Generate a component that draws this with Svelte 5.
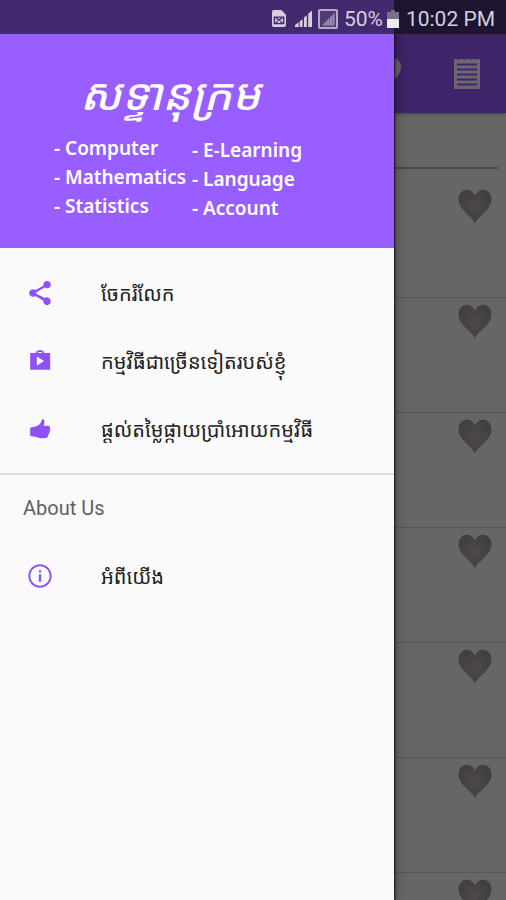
<script>
  const subjects = [
    ['Computer', 'Mathematics', 'Statistics'],
    ['E-Learning', 'Language', 'Account'],
  ];
  const actions = [
    { icon: 'share', label: 'ចែករំលែក' },
    { icon: 'shop', label: 'កម្មវិធីជាច្រើនទៀតរបស់ខ្ញុំ' },
    { icon: 'thumb', label: 'ផ្តល់តម្លៃផ្កាយប្រាំអោយកម្មវិធី' },
  ];
  const about = [{ icon: 'info', label: 'អំពីយើង' }];
  const rows = [1, 2, 3, 4, 5, 6, 7];
</script>

{#snippet menu(items)}
  <ul>
    {#each items as item}
      <li>
        <button class="item">
          <svg class="icon" viewBox="0 0 24 24" aria-hidden="true">
            {#if item.icon === 'share'}
              <path d="M18 15.600c-.76 0-1.440.3-1.960.77L8.910 12.700c.05-.23.09-.46.09-.7s-.04-.47-.09-.7l7.050-4.110c.54.5 1.250.81 2.040.81 1.800 0 3.300-1.400 3.300-3.200S19.800 1.800 18 1.800s-3.200 1.400-3.200 3.200c0 .24.04.47.09.7L8.040 9.500C7.500 9 6.790 8.700 6 8.700c-1.800 0-3.300 1.500-3.300 3.300s1.500 3.300 3.300 3.300c.79 0 1.500-.31 2.040-.81l6.920 4.160c-.05.21-.08.43-.08.65 0 1.700 1.400 3.120 3.120 3.120s3.200-1.420 3.200-3.120-1.480-3.700-3.200-3.700z" />
            {:else if item.icon === 'shop'}
              <path fill-rule="evenodd" d="M8.400 5.200C8.700 3.500 10 2.600 12 2.600s3.300.9 3.600 2.600h5.100v14.200H3.600V5.200zM9.700 5.200h4.600C14 4.500 13.200 4.200 12 4.200s-2 .3-2.300 1zM9.300 8.200v7.800l6.200-3.900z" />
            {:else if item.icon === 'thumb'}
              <path d="M3.600 11l4.700-1.200c2.700-.8 4.600-2.600 5.300-5.500.3-1 1.700-.8 2 .2.400 1.500.1 3-.5 4.700H19c1 0 1.700.8 1.400 1.700.5.600.5 1.500 0 2.100.3.700.1 1.500-.5 2 .2.800-.1 1.500-.8 1.900 0 1.500-.8 2.700-2.300 2.900-2.700.5-5.400.2-7.700-1L3.600 18z" />
            {:else}
              <path d="M11 7h2v2h-2zm0 3.500h2V17h-2zM12 2C6.480 2 2 6.480 2 12s4.480 10 10 10 10-4.480 10-10S17.520 2 12 2zm0 18.300c-4.600 0-8.300-3.700-8.300-8.300S7.400 3.700 12 3.700s8.300 3.700 8.300 8.300-3.700 8.300-8.300 8.300z" />
            {/if}
          </svg>
          <span>{item.label}</span>
        </button>
      </li>
    {/each}
  </ul>
{/snippet}

<div class="screen">
  <main class="page">
    <header class="appbar">
      <button class="tool" aria-label="Favourites">
        <svg class="fav" viewBox="0 0 34 34" aria-hidden="true">
          <path d="M17 32C13 27 1 20 1 10 1 0 13-2 17 6c4-8 16-6 16 4 0 10-12 17-16 22z" />
        </svg>
      </button>
      <button class="tool" aria-label="Notes">
        <svg class="note" viewBox="0 0 26 32" aria-hidden="true">
          <path class="sheet" d="M0 1h3l1 1 2-1h3l1 1 2-1h3l1 1 2-1h3l1 1 2-1h2v30H0z" />
          <path class="rules" d="M3 6.500h20M3 11.500h20M3 16.500h20M3 21.500h20M3 26.500h20" />
        </svg>
      </button>
    </header>
    <div class="search"><input type="text" aria-label="Search" /></div>
    <div class="words">
      {#each rows as row}
        <div class="word">
          <button class="tool" aria-label="Add word {row} to favourites">
            <svg class="heart" viewBox="0 0 34 34" aria-hidden="true">
              <defs>
                <radialGradient id="shade{row}">
                  <stop offset="0" stop-color="#4e4949" />
                  <stop offset="1" stop-color="#423f3f" />
                </radialGradient>
              </defs>
              <path fill="url(#shade{row})" d="M17 34C13.500 27 .5 20.500 .5 10.500 .5-.5 13-2.500 17 6.500c4-9 16.500-7 16.500 4 0 10-13 16.500-16.500 23.500z" />
            </svg>
          </button>
        </div>
      {/each}
    </div>
  </main>

  <nav class="drawer">
    <header class="banner">
      <h1>សទ្ទានុក្រម</h1>
      <div class="subjects">
        {#each subjects as column}
          <ul>
            {#each column as subject}<li>- {subject}</li>{/each}
          </ul>
        {/each}
      </div>
    </header>
    <section class="group">{@render menu(actions)}</section>
    <section class="about">
      <h2>About Us</h2>
      {@render menu(about)}
    </section>
  </nav>

  <div class="status">
    <svg class="sim" viewBox="0 0 15 18" aria-hidden="true">
      <path fill="#d5cfdf" d="M2 0h8l5 5v11a2 2 0 0 1-2 2H2a2 2 0 0 1-2-2V2a2 2 0 0 1 2-2z" />
      <path fill="none" stroke="#43296e" stroke-width="1.500" d="M2.500 7.500h10v7h-10zM4 8l3.500 3L11 8M4 14l2-2M11 14l-2-2" />
    </svg>
    <svg class="bars" viewBox="0 0 18 18" aria-hidden="true">
      <path fill="#d5cfdf" d="M0 16l4-3v5H0zM5 12l3-2v8H5zM9.500 8l3-2.500V18h-3zM14 4l4-3.500V18h-4z" />
    </svg>
    <svg class="nosim" viewBox="0 0 20 20" aria-hidden="true">
      <rect x="1" y="1" width="18" height="18" rx="1" fill="#523a79" stroke="#b5abc5" stroke-width="2" />
      <path fill="#9b8fb0" d="M4 16.500L16.500 4v12.500z" />
      <path stroke="#7d6b99" d="M8.500 12v5M11.500 9v8M14.500 6v11" />
    </svg>
    <span>50%</span>
    <svg class="battery" viewBox="0 0 12 18" aria-hidden="true">
      <path fill="#77708a" d="M4 0h4v2h4v8H0V2h4z" />
      <path fill="#eeeaf2" d="M0 9h12v9H0z" />
    </svg>
    <time>10:02 PM</time>
  </div>
</div>

<style>
  :global(body) { margin: 0; background: #666; }
  .screen {
    position: relative;
    height: 100vh;
    overflow: hidden;
    font-family: Roboto, "Khmer OS", "Noto Sans Khmer", "DejaVu Sans", sans-serif;
  }
  ul { list-style: none; margin: 0; padding: 0; }
  button { border: 0; padding: 0; background: none; font: inherit; color: inherit; text-align: left; }
  svg { display: block; flex: none; }

  .page { background: #666; padding-top: 34px; }
  .appbar {
    display: flex;
    justify-content: flex-end;
    align-items: center;
    gap: 52px;
    height: 79px;
    padding-right: 26px;
    box-sizing: border-box;
    background: #3e2468;
    box-shadow: 0 1px 3px #444;
  }
  .fav { width: 34px; height: 34px; fill: #68636c; }
  .note { width: 26px; height: 32px; }
  .sheet { fill: #6b6670; }
  .rules { stroke: #3e2468; stroke-width: 2; }
  .search { padding: 16px 8px 14px; }
  .search input {
    display: block;
    box-sizing: border-box;
    width: 100%;
    height: 40px;
    border: 0;
    border-bottom: 2px solid #4a4a4a;
    background: none;
  }
  .word {
    display: flex;
    justify-content: flex-end;
    align-items: flex-start;
    box-sizing: border-box;
    height: 115px;
    padding: 6px 14px;
    border-bottom: 1px solid #565656;
  }
  .heart { width: 34px; height: 34px; }

  .drawer {
    position: absolute;
    inset: 0 112px 0 0;
    background: #fafafa;
    box-shadow: 1px 0 2px #111, 2px 0 12px rgba(0, 0, 0, 0.25);
  }
  .banner {
    box-sizing: border-box;
    height: 248px;
    padding: 63px 54px 0;
    background: #985eff;
    color: #fff;
  }
  h1 {
    margin: 0 0 7px 26px;
    font-size: 44px;
    line-height: 64px;
    font-weight: 500;
    font-style: italic;
    white-space: nowrap;
  }
  .subjects {
    display: flex;
    font: 600 19px/29px "Noto Sans", "Open Sans", sans-serif;
    white-space: nowrap;
  }
  .subjects ul { min-width: 138px; }
  .subjects ul + ul { padding-top: 2px; }
  .group { padding: 11px 0 10px; border-bottom: 2px solid #dedede; }
  .item {
    display: flex;
    align-items: center;
    gap: 47px;
    width: 100%;
    height: 68px;
    padding: 0 26px;
    font-size: 20px;
    color: #222;
    white-space: nowrap;
  }
  .icon { width: 28px; height: 28px; fill: #8f50f8; }
  h2 {
    margin: 0;
    padding-left: 23px;
    font-size: 20px;
    line-height: 67px;
    font-weight: 400;
    color: #606060;
  }

  .status {
    position: absolute;
    inset: 0 0 auto;
    display: flex;
    justify-content: flex-end;
    align-items: center;
    height: 34px;
    padding: 3px 11px 0 0;
    box-sizing: border-box;
    background: linear-gradient(to left, #1d1430 112px, #43296e 112px);
    color: #d5d0dc;
    font-size: 21px;
    line-height: 30px;
  }
  .sim { width: 14px; height: 17px; margin-right: 9px; }
  .bars { width: 17px; height: 17px; margin-right: 6px; }
  .nosim { width: 20px; height: 20px; margin-right: 6px; }
  .battery { width: 12px; height: 18px; margin: 0 7px 0 4px; }
</style>
